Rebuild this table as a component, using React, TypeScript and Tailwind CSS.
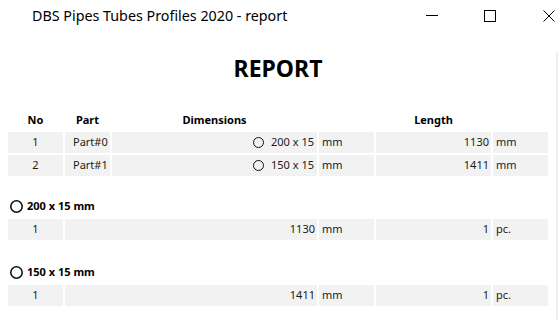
import React from 'react';

const cell = 'h-[21px] bg-[#f2f2f2] flex items-center text-[11px] text-[#1a1a1a]';

const rows = [
  { no: '1', part: 'Part#0', dim: '200 x 15', len: '1130' },
  { no: '2', part: 'Part#1', dim: '150 x 15', len: '1411' },
];

const groups = [
  { dim: '200 x 15 mm', len: '1130', qty: '1', top: 'mt-[20px]' },
  { dim: '150 x 15 mm', len: '1411', qty: '1', top: 'mt-[22px]' },
];

function Ring({ size, stroke }: { size: number; stroke: number }) {
  return (
    <svg width={size} height={size} viewBox={`0 0 ${size} ${size}`} className="shrink-0">
      <circle cx={size / 2} cy={size / 2} r={size / 2 - stroke / 2} fill="none" stroke="#111" strokeWidth={stroke} />
    </svg>
  );
}

export default function App() {
  return (
    <div className="w-[560px] h-[320px] bg-white overflow-hidden text-black" style={{ fontFamily: '"Noto Sans", sans-serif' }}>
      {/* Title bar */}
      <div className="h-[33px] flex items-center relative">
        <span className="pl-[32px] text-[14.3px] leading-none">DBS Pipes Tubes Profiles 2020 - report</span>
        <svg className="absolute left-[426px] top-[10px]" width="12" height="12" viewBox="0 0 12 12">
          <path d="M0 5.5H12" stroke="#000" strokeWidth="1" />
        </svg>
        <svg className="absolute left-[484px] top-[10px]" width="12" height="12" viewBox="0 0 12 12">
          <rect x="0.5" y="0.5" width="11" height="11" fill="none" stroke="#000" strokeWidth="1" />
        </svg>
        <svg className="absolute left-[543px] top-[10px]" width="12" height="12" viewBox="0 0 12 12">
          <path d="M0.5 0.5L11.5 11.5M11.5 0.5L0.5 11.5" stroke="#000" strokeWidth="1" />
        </svg>
      </div>

      {/* Body */}
      <div className="w-[558px] h-[287px] border-r-2 border-[#eeeeee] mt-[2px]">
        <div className="w-[556px] text-center text-[23px] font-bold leading-[32px] mt-[19px]">REPORT</div>

        <div className="pl-[8px] mt-[27px] grid grid-cols-[55px_45px_205px_55px_115px_55px] gap-x-[2px] gap-y-[2px]">
          <div className="h-[19px] flex items-center justify-center text-[11px] font-bold">No</div>
          <div className="h-[19px] flex items-center justify-center text-[11px] font-bold">Part</div>
          <div className="h-[19px] flex items-center justify-center text-[11px] font-bold">Dimensions</div>
          <div className="h-[19px]" />
          <div className="h-[19px] flex items-center justify-center text-[11px] font-bold">Length</div>
          <div className="h-[19px]" />
          {rows.map((r) => (
            <React.Fragment key={r.no}>
              <div className={`${cell} justify-center`}>{r.no}</div>
              <div className={`${cell} pl-[8px]`}>{r.part}</div>
              <div className={`${cell} justify-end pr-[3px] gap-[7px]`}>
                <Ring size={11} stroke={1} />
                <span>{r.dim}</span>
              </div>
              <div className={`${cell} pl-[3px]`}>mm</div>
              <div className={`${cell} justify-end pr-[2px]`}>{r.len}</div>
              <div className={`${cell} pl-[3px]`}>mm</div>
            </React.Fragment>
          ))}
        </div>

        {groups.map((g) => (
          <div key={g.dim}>
            <div className={`${g.top} h-[20px] pl-[10px] flex items-center gap-[4px] text-[11px] font-bold`}>
              <Ring size={13} stroke={1.6} />
              <span>{g.dim}</span>
            </div>
            <div className="mt-[3px] pl-[8px] grid grid-cols-[55px_45px_205px_55px_115px_55px] gap-x-[2px]">
              <div className={`${cell} justify-center`}>1</div>
              <div className={`${cell} col-span-2 justify-end pr-[2px]`}>{g.len}</div>
              <div className={`${cell} pl-[3px]`}>mm</div>
              <div className={`${cell} justify-end pr-[2px]`}>{g.qty}</div>
              <div className={`${cell} pl-[3px]`}>pc.</div>
            </div>
          </div>
        ))}
      </div>
    </div>
  );
}
